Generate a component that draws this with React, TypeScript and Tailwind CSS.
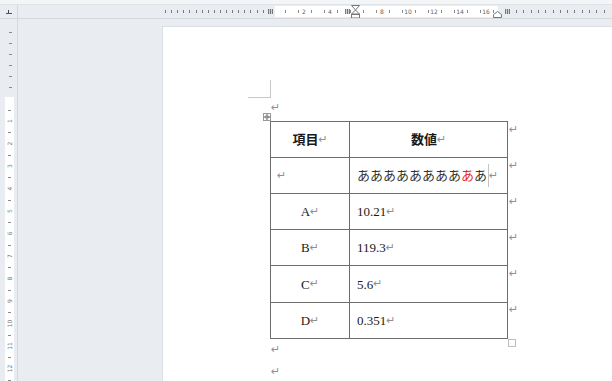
import React from "react";

const rows = [
  ["A", "10.21"],
  ["B", "119.3"],
  ["C", "5.6"],
  ["D", "0.351"],
];

const Mark = ({ className = "" }: { className?: string }) => (
  <span className={`font-['DejaVu_Sans'] text-[11px] leading-[12px] font-normal text-[#8f8f8f] ${className}`}>↵</span>
);

const TopRuler = () => {
  const O = 278;
  const U = 13;
  const half: number[] = [];
  for (let k = 0; k < 17; k++) half.push(O + U * (k + 0.5));
  const grayLeft: number[] = [];
  for (let i = 0; i < 17; i++) grayLeft.push(165 + 6.1 * i);
  const grayRight: number[] = [];
  for (let i = 0; i < 13; i++) grayRight.push(516 + 7.3 * i);
  const nums = [2, 4, 8, 10, 12, 14, 16];

  const col = (x: number) => (
    <g key={`c${x}`}>
      <rect x={x} y={9} width={5} height={5} fill="#d0d0d0" />
      <rect x={x} y={9} width={1} height={5} fill="#777" />
      <rect x={x + 2} y={9} width={1} height={5} fill="#777" />
      <rect x={x + 4} y={9} width={1} height={5} fill="#777" />
    </g>
  );

  return (
    <svg width={594} height={13} viewBox="18 5 594 13" className="block">
      <rect x={275} y={6} width={223} height={11} fill="#ffffff" />
      {grayLeft.map((x) => (
        <rect key={`l${x}`} x={Math.round(x)} y={10} width={1} height={3} fill="#7a7a7a" />
      ))}
      {grayRight.map((x) => (
        <rect key={`r${x}`} x={Math.round(x)} y={10} width={1} height={3} fill="#7a7a7a" />
      ))}
      {half.map((x) => (
        <rect key={`h${x}`} x={Math.round(x)} y={10} width={1} height={3} fill="#8a8a8a" />
      ))}
      {nums.map((n) => (
        <text
          key={n}
          x={O + U * n}
          y={13.5}
          fontSize={6}
          fontFamily="DejaVu Sans"
          fill="#666"
          textAnchor="middle"
        >
          {n}
        </text>
      ))}
      {col(268)}
      {col(345)}
      {col(505)}
      <path d="M351.5 5.5 H359.5 L355.5 10 Z M355.5 10 L351.5 14 H359.5 Z" fill="#fff" stroke="#777" strokeWidth={1} />
      <rect x={351.5} y={14.5} width={8} height={3.5} fill="#fff" stroke="#777" strokeWidth={1} />
      <path d="M493.5 17.5 V14.5 L497.5 11.5 L501.5 14.5 V17.5 Z" fill="#fff" stroke="#777" strokeWidth={1} />
    </svg>
  );
};

const LeftRuler = () => {
  const O = 98.5;
  const U = 22.5;
  const gray = [32, 43, 54, 65, 76, 87];
  const ticks: number[] = [];
  for (let k = 0; k < 13; k++) ticks.push(O + U * (k + 0.5));
  const nums = [1, 2, 3, 4, 5, 6, 7, 8, 9, 10, 11, 12];
  return (
    <svg width={17} height={376} viewBox="0 5 17 376" className="block">
      <path d="M8.5 10 V13.5 H11.5" fill="none" stroke="#444" strokeWidth={1} />
      <rect x={6} y={13} width={6} height={1} fill="#555" />
      <rect x={0} y={18} width={17} height={1} fill="#d5d9de" />
      <rect x={5} y={97} width={9} height={290} fill="#ffffff" />
      {gray.map((y) => (
        <rect key={`g${y}`} x={9} y={y} width={3} height={1} fill="#8a8a8a" />
      ))}
      {ticks.map((y) => (
        <rect key={`t${y}`} x={8} y={Math.round(y)} width={3} height={1} fill="#8a8a8a" />
      ))}
      {nums.map((n) => {
        const y = O + U * n;
        return (
          <text
            key={n}
            x={9.5}
            y={y}
            fontSize={6}
            fontFamily="DejaVu Sans"
            fill="#777"
            textAnchor="middle"
            dominantBaseline="central"
            transform={`rotate(-90 9.5 ${y})`}
          >
            {n}
          </text>
        );
      })}
    </svg>
  );
};

export default function App() {
  const cellBorder = "border-[#6e6e6e]";
  return (
    <div className="w-[612px] h-[381px] overflow-hidden bg-[#e9ecf0] flex flex-col font-['Liberation_Serif','Noto_Sans_CJK_JP',serif] text-[#1a1a1a]">
      <div className="h-[5px] bg-[#f4f5f7] border-b border-[#dfe2e6]" />
      <div className="flex-1 flex min-h-0">
        <div className="w-[18px] border-r border-[#d5d9de]">
          <LeftRuler />
        </div>
        <div className="flex-1 flex flex-col min-w-0">
          <div className="h-[14px] border-b border-[#d5d9de]">
            <TopRuler />
          </div>
          <div className="flex-1 flex min-h-0">
            <div className="w-[145px]" />
            <div className="flex-1 mt-[8px] bg-white pl-[85px] pt-[53px] shadow-[0_0_0_1px_#dcdfe3]">
              <div className="w-[23px] h-[18px] border-r border-b border-[#c8c8c8]" />
              <div className="pl-[22px]">
                <div className="h-[23px] pl-[1px] pt-[4px] flex">
                  <Mark />
                </div>
                <div className="flex items-start">
                  <div className="relative w-[238px]">
                    <svg
                      width={8}
                      height={8}
                      viewBox="0 0 8 8"
                      className="absolute -left-[7px] -top-[8px] bg-white"
                    >
                      <rect x={0.5} y={0.5} width={7} height={7} fill="#fff" stroke="#999" strokeWidth={1} />
                      <path d="M4 1.5 V6.5 M1.5 4 H6.5 M3 2.5 L4 1.5 L5 2.5 M3 5.5 L4 6.5 L5 5.5 M2.5 3 L1.5 4 L2.5 5 M5.5 3 L6.5 4 L5.5 5" fill="none" stroke="#555" strokeWidth={0.8} />
                    </svg>
                    <div className="flex">
                      <div className={`w-[80px] h-[37px] border ${cellBorder} flex items-center justify-center font-bold text-[13px] leading-none`}>
                        項目<Mark />
                      </div>
                      <div className={`w-[158px] h-[37px] border-t border-r border-b ${cellBorder} flex items-center justify-center font-bold text-[13px] leading-none`}>
                        数値<Mark />
                      </div>
                    </div>
                    <div className="flex">
                      <div className={`w-[80px] h-[36px] border-l border-r border-b ${cellBorder} flex items-center pl-[6px]`}>
                        <Mark />
                      </div>
                      <div className={`w-[158px] h-[36px] border-r border-b ${cellBorder} flex items-center pl-[7px] text-[13px] leading-none text-[#333]`}>
                        <span>
                          ああああああああ<span className="text-[#e8262a]">あ</span>あ
                        </span>
                        <span className="w-px h-[23px] bg-[#c4c4c4] ml-[1px]" />
                        <Mark />
                      </div>
                    </div>
                    {rows.map(([label, value]) => (
                      <div className="flex" key={label}>
                        <div
                          className={`w-[80px] ${label === "C" ? "h-[37px]" : "h-[36px]"} border-l border-r border-b ${cellBorder} flex items-center justify-center text-[13px] leading-none`}
                        >
                          {label}
                          <Mark />
                        </div>
                        <div
                          className={`w-[158px] ${label === "C" ? "h-[37px]" : "h-[36px]"} border-r border-b ${cellBorder} flex items-center pl-[7px] text-[13px] leading-none`}
                        >
                          {value}
                          <Mark />
                        </div>
                      </div>
                    ))}
                    <div className="absolute left-full top-full w-[8px] h-[8px] border border-[#bdbdbd] bg-white" />
                  </div>
                  <div className="flex flex-col pl-[1px]">
                    {[0, 1, 2, 3, 4, 5].map((i) => (
                      <div key={i} className="h-[36px] pt-[3px] flex items-start">
                        <Mark />
                      </div>
                    ))}
                  </div>
                </div>
                <div className="h-[22px] pl-[1px] pt-[5px] flex">
                  <Mark />
                </div>
                <div className="h-[22px] pl-[1px] pt-[5px] flex">
                  <Mark />
                </div>
              </div>
            </div>
          </div>
        </div>
      </div>
    </div>
  );
}
